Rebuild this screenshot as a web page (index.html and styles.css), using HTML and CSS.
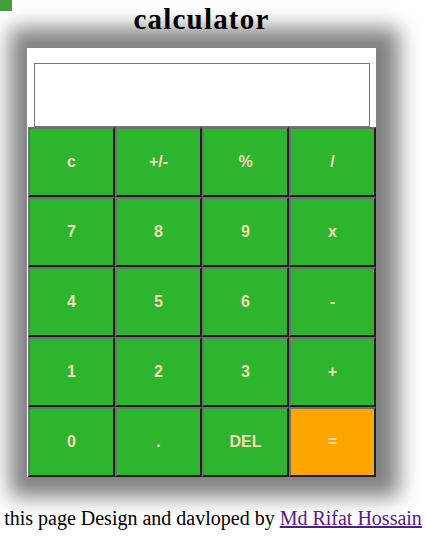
FILE: index.html
```html
<!DOCTYPE html>
<html>
<head>
<meta charset="utf-8">
<title>calculator</title>
<link rel="stylesheet" href="styles.css">
</head>
<body>
<div class="dot"></div>
<div class="wrap">
  <h1 class="title">calculator</h1>
  <div class="calc">
    <input class="screen" type="text">
    <div class="keys">
      <button class="key">c</button>
      <button class="key">+/-</button>
      <button class="key">%</button>
      <button class="key">/</button>
      <button class="key">7</button>
      <button class="key">8</button>
      <button class="key">9</button>
      <button class="key">x</button>
      <button class="key">4</button>
      <button class="key">5</button>
      <button class="key">6</button>
      <button class="key">-</button>
      <button class="key">1</button>
      <button class="key">2</button>
      <button class="key">3</button>
      <button class="key">+</button>
      <button class="key">0</button>
      <button class="key">.</button>
      <button class="key">DEL</button>
      <button class="key key-eq">=</button>
    </div>
  </div>
</div>
<p class="footer">this page Design and davloped by <a class="author" href="#">Md Rifat Hossain</a></p>
</body>
</html>
```
FILE: styles.css
```css
body {
  margin: 0;
  font-family: "Liberation Serif", "Times New Roman", serif;
  background: #fff;
  color: #000;
}
.dot {
  position: absolute;
  left: 0;
  top: 0;
  width: 12px;
  height: 11px;
  background: #3f9e3f;
}
.wrap {
  width: 349px;
  margin-left: 27px;
}
.title {
  margin: 3px 0 12px;
  font-size: 29px;
  line-height: 33px;
  letter-spacing: 1.2px;
  font-weight: bold;
  text-align: center;
}
.calc {
  background: #fff;
  box-shadow: 3px 0 20px 20px #808080;
  padding-top: 15px;
}
.screen {
  display: block;
  box-sizing: border-box;
  margin: 0 0 0 7px;
  width: 336px;
  height: 64px;
  border: 1px solid #767676;
  padding: 0;
  background: #fff;
}
.keys {
  display: grid;
  grid-template-columns: repeat(4, 87px);
  grid-auto-rows: 70px;
  margin-left: 1px;
}
.key {
  margin: 0;
  padding: 0;
  background: #2db52f;
  border: 2px solid;
  border-color: #707070 #1e1e1e #1e1e1e #707070;
  color: #f3dcb2;
  font-family: "Liberation Sans", Arial, sans-serif;
  font-weight: bold;
  font-size: 16px;
}
.key-eq {
  background: #ffa500;
}
.footer {
  margin: 30px 0 0;
  font-size: 20px;
  line-height: 23px;
  text-align: center;
  white-space: nowrap;
}
.author {
  color: #551a8b;
}
```
